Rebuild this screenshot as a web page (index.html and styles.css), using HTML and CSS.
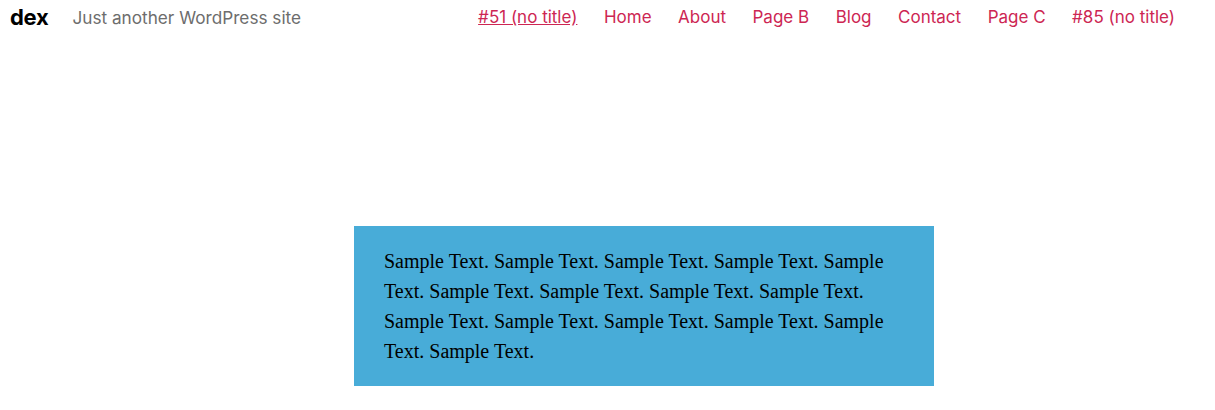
FILE: index.html
```html
<!DOCTYPE html>
<html lang="en">
<head>
    <meta charset="UTF-8">
    <meta name="viewport" content="width=device-width, initial-scale=1.0">
    <title>dex</title>
    <link rel="stylesheet" href="styles.css">
</head>
<body>
    <header class="site-header">
        <div class="branding">
            <span class="site-title">dex</span>
            <span class="site-desc">Just another WordPress site</span>
        </div>
        <nav class="menu">
            <a href="#" class="current">#51 (no title)</a>
            <a href="#">Home</a>
            <a href="#">About</a>
            <a href="#">Page B</a>
            <a href="#">Blog</a>
            <a href="#">Contact</a>
            <a href="#">Page C</a>
            <a href="#">#85 (no title)</a>
        </nav>
    </header>

    <main class="content">
        <div class="sample-box">
            <p>Sample Text. Sample Text. Sample Text. Sample Text. Sample Text. Sample Text. Sample Text. Sample Text. Sample Text. Sample Text. Sample Text. Sample Text. Sample Text. Sample Text. Sample Text.</p>
        </div>
    </main>
</body>
</html>
```

FILE: styles.css
```css
body {
    margin: 0;
    padding: 0;
    background: #fff;
    font-family: Inter, "Noto Sans", sans-serif;
}
.site-header {
    display: flex;
    justify-content: space-between;
    align-items: center;
    height: 34px;
    padding: 0 40px 0 10px;
}
.branding {
    display: flex;
    align-items: center;
    gap: 24px;
}
.site-title {
    font-size: 22px;
    font-weight: 700;
    color: #000;
    letter-spacing: -0.3px;
}
.site-desc {
    font-size: 17.2px;
    color: #6d6d6d;
}
.menu {
    display: flex;
    gap: 26.5px;
}
.menu a {
    font-size: 17px;
    color: #cd2653;
    text-decoration: none;
}
.menu a.current {
    text-decoration: underline;
}
.content {
    padding: 192px 0 0 354px;
}
.sample-box {
    width: 520px;
    padding: 20px 30px;
    background-color: #48acd8;
}
.sample-box p {
    margin: 0;
    font-family: "Liberation Serif", serif;
    font-size: 20px;
    line-height: 30px;
    color: #000;
}
```
